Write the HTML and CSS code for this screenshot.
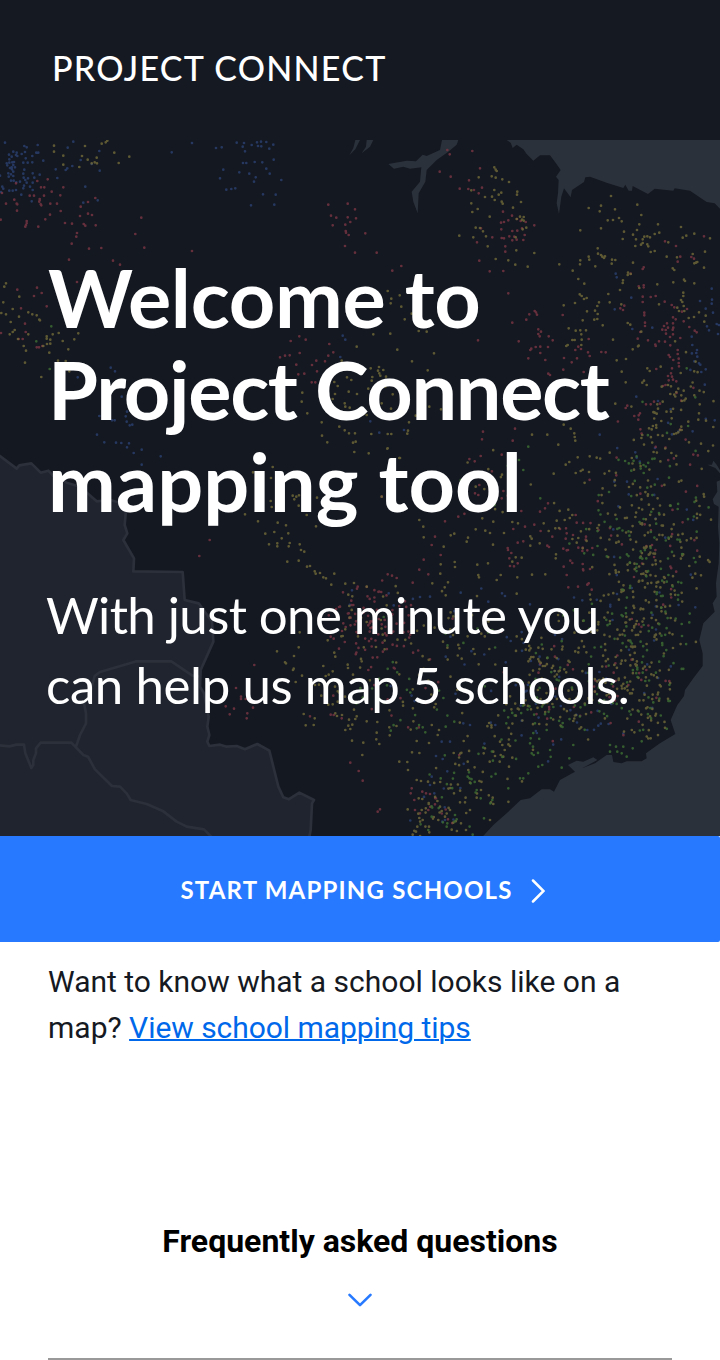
FILE: index.html
```html
<!DOCTYPE html>
<html lang="en">
<head>
<meta charset="utf-8">
<title>Project Connect</title>
<link rel="stylesheet" href="styles.css">
</head>
<body>
<header class="header"><span class="brand">PROJECT CONNECT</span></header>
<main>
<section class="hero">
<svg class="map" viewBox="0 0 720 696" aria-hidden="true">
<g transform="translate(0 300) scale(.33333)">
<path class="country" d="M-9 42L0 48 50 86 58 76 94 70 122 98 145 92 160 108 200 128 240 140 290 184 330 180 360 188 378 210 374 255 382 280 370 300 402 355 400 394 548 396 554 480 596 490 636 545 640 605 602 690 600 740 612 760 626 830 622 860 628 885 622 905 628 918 660 914 680 920 710 918 735 928 772 912 808 932 835 1040 850 1072 866 1078 898 1058 942 1080 936 1090 932 1170 926 1200H-9Z"/>
<path class="border" d="M602 710L576 706 514 664 410 664 300 696 284 708 270 760 252 790 258 820V850L240 885 228 920M-9 915L28 919 50 914 72 914 76 940 94 984 100 975 100 960 108 940V925L122 908H214L250 945 264 950 285 988 336 1038 360 1040 380 1060 392 1080 440 1092 490 1114 530 1145 560 1160 612 1168 636 1192"/>
</g>
<g transform="translate(360 0) scale(.33333)">
<path class="water" d="M440 0L452 8 458 24 470 14 490 28 500 42 520 62 540 46 570 46 588 70 602 90 588 110 596 120 594 160 590 190 597 222 604 170 612 145 632 172 636 150 672 126 676 112 690 110 740 128 790 144 796 134 806 152 816 152 818 138 864 162 884 146 940 152 944 145 990 152 1040 186 1064 190 1080 206V0ZM246 0L240 30 200 48 188 44 168 64 140 62 85 72 102 86 130 80 150 86 184 82 180 125 155 155 160 185 173 220 176 160 196 125 200 90 230 60 265 35 290 14 295 0ZM40 0L30 20 5 40 18 20 20 0ZM0 0L-14 28-32 46-20 24-14 0Z"/>
</g>
<g transform="translate(360 300) scale(.33333)">
<path class="water" d="M1082 94L1070 74 1060 62 1056 74 1042 74 1066 84 1082 102V120L1070 125 1072 155 1058 178 1062 192 1076 200 1074 260 1078 310 1076 370 1068 430 1070 470 1058 490 1064 515 1030 550 1018 600 1028 640V678L1000 715 975 750 972 768 952 795 932 840 946 882 900 910 858 940 860 955 845 964H800L785 970 760 966 756 945 740 945 705 970 668 984 690 972 712 960 700 952 670 965 650 962 624 975 645 995 600 1020 582 1055 570 1048H545L510 1075 482 1080 440 1120 400 1155 364 1194H1082Z"/>
</g>
<g id="schools"></g>
</svg>
<div class="hero-copy">
<h1 class="title"><span class="t1">Welcome to</span><br><span class="t2">Project Connect</span><br><span class="t3">mapping tool</span></h1>
<p class="lead"><span class="l1">With just one minute you</span><br><span class="l2">can help us map 5 schools.</span></p>
</div>
</section>
<a class="cta"><span class="cta-label">START MAPPING SCHOOLS</span><svg class="cta-icon" viewBox="0 0 14 24"><path d="M2 1.500L12.500 12 2 22.500"/></svg></a>
<p class="hint"><span>Want to know what a school looks like on a</span><br><span>map? </span><a class="link">View school mapping tips</a></p>
<section class="faq">
<h2 class="faq-title">Frequently asked questions</h2>
<svg class="faq-icon" viewBox="0 0 24 14"><path d="M1.500 1.800L12 12.200 22.500 1.800"/></svg>
<div class="rule"></div>
</section>
</main>
<script src="map.js"></script>
</body>
</html>
```
FILE: styles.css
```css
body { margin: 0; background: #fff; color: #151922; font-family: Roboto, sans-serif; }
.header { box-sizing: border-box; height: 140px; padding: 42px 0 0 52px; background: #151922; color: #fff; font: 500 34px/52px Lato, sans-serif; }
.brand { letter-spacing: 1.300px; white-space: nowrap; }
.hero { display: grid; height: 696px; overflow: hidden; background: #141821; color: #fff; font-family: Lato, sans-serif; }
.map, .hero-copy { grid-area: 1 / 1; }
.map { display: block; width: 720px; height: 696px; }
.country { fill: #20242e; stroke: #2b303a; stroke-width: 8; stroke-linejoin: round; }
.border { fill: none; stroke: #2b303a; stroke-width: 8; stroke-linejoin: round; }
.water { fill: #2b313a; }
.dot { fill: none; stroke-width: 2.700; stroke-linecap: round; opacity: .8; }
.blue { stroke: #2b4071; }
.red { stroke: #7b3643; }
.yellow { stroke: #706a38; }
.green { stroke: #3d6e32; }
.hero-copy { z-index: 1; padding: 111px 0 0 48px; white-space: nowrap; }
.title { margin: 0; font-size: 81px; line-height: 92px; font-weight: 700; }
.lead { margin: 53px 0 0 -2px; font-size: 51px; line-height: 70px; font-weight: 400; }
.t1 { letter-spacing: -.3px; }
.t2 { letter-spacing: -1.350px; }
.t3 { letter-spacing: .1px; }
.l1 { letter-spacing: -.6px; }
.l2 { letter-spacing: -.42px; }
.cta { display: flex; box-sizing: border-box; height: 106px; padding: 1px 0 0 5px; align-items: center; justify-content: center; gap: 18px; border-radius: 0 2px 2px 0; background: #277aff; color: #fff; font: 700 24px/30px Lato, sans-serif; }
.cta-label { letter-spacing: 1.200px; white-space: nowrap; }
.cta-icon { width: 14px; height: 24px; margin-top: 2px; fill: none; stroke: #fff; stroke-width: 2.500; stroke-linecap: round; }
.hint { margin: 17px 48px 0; font-size: 30px; line-height: 46px; }
.link { color: #0068ea; letter-spacing: -.05px; text-decoration: underline; text-decoration-thickness: 2px; }
.faq { display: flex; flex-direction: column; align-items: center; padding: 167px 48px 0; }
.faq-title { margin: 0; color: #000; font-size: 32px; line-height: 46px; font-weight: 700; white-space: nowrap; }
.faq-icon { width: 24px; height: 14px; margin-top: 29px; fill: none; stroke: #277aff; stroke-width: 2.600; stroke-linecap: round; stroke-linejoin: round; }
.rule { width: 100%; height: 2px; margin-top: 51px; background: #999; }
```
FILE: map.js
```js
// School positions, stored in thirds of a pixel from each tile's corner.
const tiles = [
  { x: 0, y: 0, c: 'blue', p: '15 8 40 35 50 38 73 18 80 22 75 36 113 15 109 38 115 38 48 45 27 44 35 50 28 58 52 48 65 42 77 55 97 48 20 70 28 68 37 67 22 76 42 66 40 75 30 84 35 82 45 82 70 68 83 68 97 67 36 88 73 89 25 100 40 95 33 103 0 107 26 110 40 108 70 101 98 100 119 104 103 113 71 113 76 120 84 115 33 122 41 122 60 125 49 127 80 128 98 128 72 137 70 145 90 140 98 150 7 140 10 146 3 156 28 152 38 152 48 150 64 164 95 184 130 62 167 88 172 114 197 90 202 85 217 78 203 23 220 5 242 60 275 72 299 92 298 33 256 140 293 181 250 188 515 37 576 9 648 24 665 22 710 8 732 9 728 20 735 34 755 15 771 7 774 18 783 5 784 19 799 6 820 14 808 26 729 69 739 69 764 66 787 67 821 59 718 97 748 101 767 112 762 125 799 86 809 101 670 89 660 115 844 120 679 149 694 147 706 145 789 163 827 164 753 196 823 194 1028 587 1036 599 1021 651 332 683 345 694 233 712 365 770 381 815 377 829 380 845 389 856 397 854 344 841 336 841 298 828 291 884 313 907 348 908 364 909 387 910 381 922 401 939 425 929 425 974 482 949' },
  { x: 0, y: 0, c: 'red', p: '48 130 6 159 18 191 43 179 50 191 52 193 51 212 2 239 112 123 143 118 123 142 133 142 155 155 190 142 181 166 89 167 102 167 132 167 119 177 119 181 118 185 122 193 124 196 151 191 171 191 182 213 150 224 136 238 80 243 80 249 78 255 76 260 115 260 195 249 216 251 286 174 264 186 242 200 264 221 276 225 240 228 251 252 256 257 287 256 231 279 229 290 215 311 267 326 304 324 207 359 339 362 360 374 424 233 406 282 433 323 576 333 231 426 52 449 111 443 125 459 102 468 140 499 63 505 75 551 77 576 3 579 56 597 68 597 110 622 117 622 127 618 872 603 898 589 917 599 988 612 1000 637 899 639 869 646 855 647 840 652 949 662 975 664 985 647 889 674 936 675 951 694 913 701 895 703 935 727 946 727 985 194 993 227 1009 233 998 256 1043 191 1065 208 1043 232 1051 246 1068 235 1036 254 1037 273 1038 278 1046 285 1035 318 1065 338' },
  { x: 0, y: 0, c: 'yellow', p: '162 17 162 35 255 18 305 11 317 7 322 2 343 38 388 50 356 69 246 48 263 59 290 53 284 67 291 70 275 70 238 81 190 47 190 74 13 440 18 430 58 470 10 487 38 507 4 519 18 523 57 530 85 517 97 523 110 526 118 539 120 541 32 546 44 570 38 576 29 583 85 583 54 597 71 618 78 632 158 583 176 579 140 589 140 596 151 599 141 612 151 611 130 618 188 603 235 580 223 598 205 628 148 638 75 668 174 662 197 663 208 694 124 711 1070 620 1025 662 1041 712 1054 720 1003 726 1013 738 1046 755 1005 762 1034 790 1036 800 1049 803 998 777 1071 762 907 758 905 785 922 820 965 847 966 887 982 907 1018 860 1034 871 1047 880 1065 880 1059 908 1067 905 1063 936 818 981 759 997 813 1014 830 1035' },
  { x: 0, y: 0, c: 'green', p: '154 559 109 604 149 687' },
  { x: 360, y: 0, c: 'red', p: '262 30 269 43 337 33 239 95 272 110 360 85 327 121 299 146 325 147 342 150 356 160 366 143 16 280 50 338 97 392 124 378 429 215 423 248 432 246 445 241 456 227 471 237 482 243 497 246 523 256 486 265 424 268 457 273 472 272 494 285 425 294 432 295 448 289 457 301 463 290 470 299 490 300 397 292 436 319 436 335 363 265 351 307 358 362 389 394 430 393 445 460 457 548 499 539 508 523 524 513 528 517 531 524 535 568 543 575 535 582 539 589 566 589 578 601 476 604 541 620 527 621 514 626 511 630 541 639 564 621 505 655 556 660 565 701 570 705 612 654 635 667 651 655 646 630 655 620 663 627 684 637 689 648 686 597 610 689 608 525 671 696 724 636 737 637 369 875 366 898 465 866 458 902 344 964 362 948 425 944 354 601 812 401 851 382 848 387 836 439 851 436 851 442 781 505 793 497 789 510 848 470 872 471 887 468 848 486 853 518 853 526 855 548 855 558 841 576 833 596 935 495 943 502 914 485 966 515 981 507 939 532 947 538 971 544 921 550 939 550 912 558 924 563 940 563 907 569 917 570 938 569 918 581 939 583 961 594 930 591 897 604 915 605 886 614 887 618 864 601 931 616 953 630 953 642 956 656 940 660 956 669 957 679 936 685 930 651 988 561 1004 572 1010 577 924 708 936 710 939 719 949 724 926 721 909 738 802 797 797 804 823 828 836 826 835 839 858 793 872 793 882 785 900 791 926 645 933 700 889 687 915 304 948 318 961 350 994 351 1002 356 953 365 1032 289' },
  { x: 360, y: 0, c: 'yellow', p: '403 82 407 89 410 93 395 109 407 113 427 118 447 126 356 112 334 151 403 150 424 158 416 164 396 170 375 171 404 180 425 185 428 191 472 155 471 164 483 186 459 203 334 190 353 207 337 216 389 230 470 237 480 230 491 231 486 239 491 242 499 263 488 268 347 263 360 264 369 274 378 289 340 292 298 287 383 319 467 292 469 331 523 339 407 357 445 361 466 374 503 380 598 373 638 392 655 417 673 431 659 463 665 468 672 477 680 474 645 489 611 496 717 487 712 498 705 512 681 514 713 522 703 539 712 537 668 541 728 556 626 565 647 572 661 571 678 571 664 583 637 600 644 600 665 599 623 615 664 615 619 618 686 204 719 214 723 197 753 168 765 208 743 241 759 240 777 234 785 244 661 271 723 265 792 275 788 297 832 194 844 225 838 253 831 270 819 284 894 253 898 278 884 282 862 289 853 290 848 298 870 292 828 298 826 318 843 314 848 309 862 313 865 319 872 336 884 333 963 261 979 287 968 293 1003 281 1050 295 925 307 998 342 1035 335 920 350 951 352 713 325 714 341 686 350 688 359 661 361 660 373 706 379 723 345 727 350 732 354 735 349 756 359 766 360 755 371 819 368 1003 370 1008 368 1012 366 1032 383 938 385 943 390 804 398 812 402 803 405 789 421 788 429 892 433 940 427 972 419 975 423 1003 430 838 444 780 450 970 458 970 468 963 480 745 462 749 487 784 493 897 493 952 503 967 486 971 498 973 513 957 513 803 549 811 554 836 617 844 575 1017 517 1002 531 986 534 1037 527 1033 545 759 599 818 628 834 619 770 661 798 657 785 695 797 727 862 685 869 693 852 722 847 728 860 735 902 680 924 735 933 739 955 746 949 756 971 752 964 766 977 776 1003 766 966 783 1019 793 892 793 894 806 766 791 884 818 890 821 933 815 935 835 904 843 964 860 960 870 955 877 949 880 867 865 889 863 894 885 928 897 987 907 1023 911 908 785 931 762 943 764 905 740 965 870 942 882 985 845 1038 842 1060 861 91 581 112 629 222 640 156 664 203 691 40 583 119 466 94 476 124 500 92 490 83 453 155 521 134 538 176 573 200 575 32 685 57 681 70 690 54 692 58 700 37 711 35 722 25 746 61 707 78 710 76 740 98 763 38 765 45 785 65 790 93 806 20 825 147 847 144 872 142 881 83 882 94 882 34 882 82 926 26 940 120 954 208 800 243 808 167 827 516 884 562 884 611 854 632 866 643 880 644 891 646 902 595 914 653 952 628 966 617 974 647 999 662 993 689 949 710 953 749 938 687 996 581 1001' },
  { x: 360, y: 0, c: 'blue', p: '767 401 770 412 764 508 814 473 817 567 877 563 1055 446 1056 479 1055 491 1037 506 1020 483 1059 518 1070 552 1077 555 1041 559 1047 571 1074 582 995 590 997 615 1011 630 1009 639 1012 650 1003 664 1017 670 1021 674 1037 688 1024 696 894 783 829 770 58 878 132 870 31 844 719 884 885 924 826 937 1064 841' },
  { x: 360, y: 300, c: 'yellow', p: '83 25 118 54 65 170 178 240 190 260 191 292 251 320 272 286 283 281 324 293 320 305 347 268 376 272 390 279 399 314 400 245 367 235 432 279 457 246 474 250 511 289 515 296 511 317 539 310 467 352 485 353 457 365 384 370 352 374 284 366 285 381 242 373 241 401 217 430 264 427 357 412 422 405 410 420 516 404 556 403 472 412 254 442 470 461 590 242 586 265 597 264 637 225 588 343 587 355 650 308 655 294 668 325 20 440 257 466 5 664 305 656 340 627 344 642 249 605 388 627 364 581 356 673 20 844 52 846 50 878 89 886 49 898 58 912 10 908 7 945 118 965 142 966 144 990 156 937 170 903 207 909 233 885 237 870 311 903 281 939 176 1075 187 1077 178 1134 172 1160 168 1175 158 1184 188 1140 185 1110 183 1023 170 1020 375 925 371 940 420 905 427 915 450 918 434 930 400 935 422 945 405 948 389 965 419 965 430 950 447 980 457 953 323 965 325 990 330 1028 271 1044 282 1060 300 1087 315 1087 350 1073 363 1050 398 1073 393 1087 400 1092 330 1110 240 1100 245 1113 270 1110 255 1130 235 1140 280 1148 303 1150 207 1160 208 1177 275 1169 318 1170 390 1140' },
  { x: 360, y: 300, c: 'red', p: '65 170 225 290 215 315 242 345 191 359 178 389 205 403 83 403 96 407 110 414 158 428 255 244 295 230 443 324 444 330 454 339 448 355 450 378 462 379 473 370 473 308 490 304 495 260 460 267 484 213 523 254 540 215 555 205 564 190 562 317 567 321 577 290 600 267 618 265 620 280 617 296 639 285 647 225 650 248 610 326 620 331 624 330 611 380 631 362 637 369 655 323 668 323 678 290 677 299 682 331 697 324 668 372 669 388 670 391 690 387 620 405 625 442 654 440 682 434 686 430 695 449 345 160 355 165 358 135 425 175 375 210 155 1045 152 1060 163 1080 187 1055 198 1060 210 1062 228 1075 225 1093 165 1110 180 1120 205 1110 53 1115 60 1108 8 1022 25 690 210 658 190 690 52 652' },
  { x: 360, y: 300, c: 'green', p: '505 20 490 90 541 175 477 60 170 865 188 862 257 860 283 845 525 850 560 870 512 895 510 910 519 920 521 945 515 940 535 980 547 975 480 1015 490 1015 505 1000 605 983 628 955 640 915 327 997 323 1010 328 1015 332 1030 350 1050 445 1045 362 1075 397 1080 391 1090 372 1135 285 1125 290 1138 262 1150 260 1160 215 1130 205 1170 338 1184 750 915 750 935 768 920 772 935 785 940 800 950 818 925 845 904 790 920' },
  { x: 360, y: 300, c: 'blue', p: '86 460 210 470 302 458 385 485 426 460 435 468 180 471 510 493 452 603 257 650 437 667 368 725 360 740 310 850 330 855 392 848 406 855 245 905 270 905 248 957 228 948 262 994 215 1010 210 1035 223 1060 255 1140 247 1145' },
  { x: 0, y: 300, c: 'yellow', p: '773 193 812 183 815 201 735 223 774 244 833 248 858 256 865 280 823 276 796 281 845 295 807 313 832 310 832 319 869 309 866 319 899 313 903 330 913 335 862 365 896 362 921 380 930 378 944 394 947 401 960 399 970 412 978 415 1003 401 994 434 1036 431 1062 429 1045 464 1048 498 1057 469 1076 540 878 167 889 170 897 166 883 178 896 197 920 225 948 259 951 173 910 135 831 634 896 622 882 648 855 667 858 670 881 686 879 690 906 707 887 726 1003 638 1006 650 970 678 998 694 977 708 986 704 1043 674 1044 684 1059 704 945 735 957 734 1005 740 1013 754 1018 758 964 767 985 794 998 793 1013 785 1035 770 911 822 917 856 941 855 944 835 1006 820 1011 828 1026 825 1047 839 1057 854 1045 857 1051 867 1036 870 1070 829 1066 837 1056 902 1062 809 1028 588 1036 568 1024 589 983 601 899 577' },
  { x: 0, y: 300, c: 'red', p: '629 300 598 348 763 675 708 744 723 770 723 777 737 777 759 803 742 820 740 835 677 799 702 806 689 823 930 829 992 824 1001 825 1025 835 1051 968 1076 993 1029 457 1017 501 1020 500 1054 482 1055 495 1046 520 1052 533 1073 440 1071 446 1030 550 1037 561 1026 573 992 590 1001 596 1000 767 1060 495 1074 580' }
];

// Dense districts: centre x/y, spread x/y, then blue, red, yellow and green counts.
const districts = [
  [640, 337, 24, 22, 8, 6, 34, 22], [637, 408, 26, 26, 2, 5, 62, 36],
  [652, 452, 30, 24, 8, 4, 48, 26], [668, 400, 18, 28, 2, 12, 30, 9],
  [646, 500, 26, 27, 6, 3, 46, 30], [618, 556, 34, 24, 10, 12, 56, 30],
  [638, 540, 24, 24, 2, 10, 34, 16], [545, 517, 24, 26, 12, 4, 42, 10],
  [528, 560, 28, 24, 14, 6, 42, 20], [592, 480, 28, 28, 9, 4, 26, 10],
  [565, 583, 26, 18, 10, 6, 14, 20], [382, 495, 22, 18, 1, 60, 14, 2],
  [376, 461, 20, 14, 3, 20, 8, 0], [405, 558, 30, 20, 4, 12, 24, 22],
  [445, 500, 28, 30, 6, 2, 28, 8], [490, 345, 26, 22, 0, 6, 14, 4],
  [660, 300, 26, 24, 6, 10, 16, 8], [575, 375, 22, 25, 0, 8, 16, 5],
  [655, 590, 14, 20, 2, 4, 24, 10], [690, 380, 14, 36, 1, 3, 18, 7],
  [432, 670, 16, 16, 3, 5, 22, 9], [458, 640, 22, 22, 4, 1, 16, 10],
  [500, 610, 26, 18, 2, 1, 14, 12], [690, 250, 14, 30, 5, 4, 18, 2]
];

const paths = { blue: '', red: '', yellow: '', green: '' };
const add = (colour, x, y) => { paths[colour] += `M${x.toFixed(1)} ${y.toFixed(1)}h0`; };

tiles.forEach(({ x, y, c, p }) => {
  const n = p.split(' ').map(Number);
  for (let i = 0; i < n.length; i += 2) add(c, x + n[i] / 3, y + n[i + 1] / 3);
});

let seed = 417;
const random = () => (seed = (seed * 16807) % 2147483647) / 2147483647;
const eastLimit = y => y < 460 ? 714 : y < 540 ? 698 : y < 600 ? 672 : y < 625 ? 565 : 510 - (y - 660) * .7;
districts.forEach(([x, y, sx, sy, ...counts]) => {
  counts.forEach((count, k) => {
    for (let i = 0; i < count; i++) {
      const px = x + (random() + random() + random() - 1.5) * sx * 1.7;
      const py = y + (random() + random() + random() - 1.5) * sy * 1.7;
      if (px < eastLimit(py)) add(['blue', 'red', 'yellow', 'green'][k], px, py);
    }
  });
});

document.getElementById('schools').innerHTML = Object.entries(paths)
  .map(([colour, d]) => `<path class="dot ${colour}" d="${d}"/>`).join('');
```
